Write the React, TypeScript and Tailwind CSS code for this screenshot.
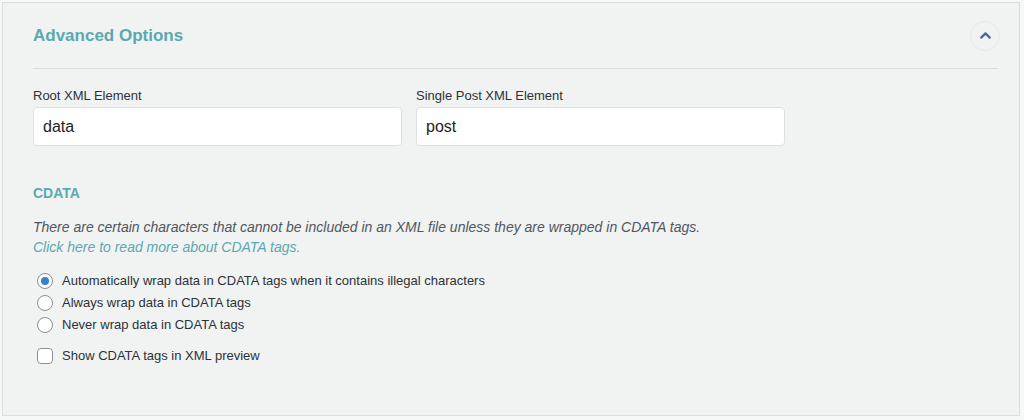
import { ChevronUp } from "lucide-react"

const font = { fontFamily: '"Liberation Sans", Arial, sans-serif' }

function TextField({ label, value }: { label: string; value: string }) {
  return (
    <div className="w-[369px]">
      <label className="block text-[13px] leading-[16px] text-[#2c3338]">{label}</label>
      <div className="mt-[3px] h-[39px] rounded-[4px] border border-[#dfe1e1] bg-white px-[9px] flex items-center text-[16px] text-[#1d2327]">
        {value}
      </div>
    </div>
  )
}

function Radio({ checked, label }: { checked?: boolean; label: string }) {
  return (
    <label className="flex items-center h-[22px] gap-[9px] pl-[4px] text-[13px] text-[#2c3338]">
      <span className="w-[16px] h-[16px] rounded-full border border-[#8c8f94] bg-white flex items-center justify-center">
        {checked && <span className="w-[8px] h-[8px] rounded-full bg-[#3582c4]" />}
      </span>
      {label}
    </label>
  )
}

export default function App() {
  return (
    <div className="w-[1024px] h-[420px] bg-[#f6f7f7] pt-[2px] pl-[2px]" style={font}>
      <div className="w-[1018px] h-[414px] border border-[#dcdede] bg-[#f1f2f2] pl-[30px] pr-[21px]">
        <div className="h-[66px] flex items-center justify-between border-b border-[#dcdcde]">
          <h2 className="text-[17px] font-bold text-[#5aa9b0]">Advanced Options</h2>
          <button className="w-[30px] h-[30px] mr-[-2px] rounded-full border border-[#e6e7e7] flex items-center justify-center text-[#4b62a8]">
            <ChevronUp size={17} strokeWidth={3} />
          </button>
        </div>

        <div className="mt-[19px] flex gap-[14px]">
          <TextField label="Root XML Element" value="data" />
          <TextField label="Single Post XML Element" value="post" />
        </div>

        <h3 className="mt-[37px] text-[14px] font-bold text-[#5aa9b0]">CDATA</h3>
        <p className="mt-[13px] text-[14px] leading-[20px] italic text-[#50575e]">
          There are certain characters that cannot be included in an XML file unless they are wrapped in CDATA tags.
          <br />
          <a className="text-[#5aa9b0]">Click here to read more about CDATA tags.</a>
        </p>

        <div className="mt-[13px] flex flex-col">
          <Radio checked label="Automatically wrap data in CDATA tags when it contains illegal characters" />
          <Radio label="Always wrap data in CDATA tags" />
          <Radio label="Never wrap data in CDATA tags" />
        </div>
        <label className="mt-[10px] flex items-center gap-[9px] pl-[4px] text-[13px] text-[#2c3338]">
          <span className="w-[16px] h-[16px] rounded-[4px] border border-[#8c8f94] bg-white" />
          Show CDATA tags in XML preview
        </label>
      </div>
    </div>
  )
}
